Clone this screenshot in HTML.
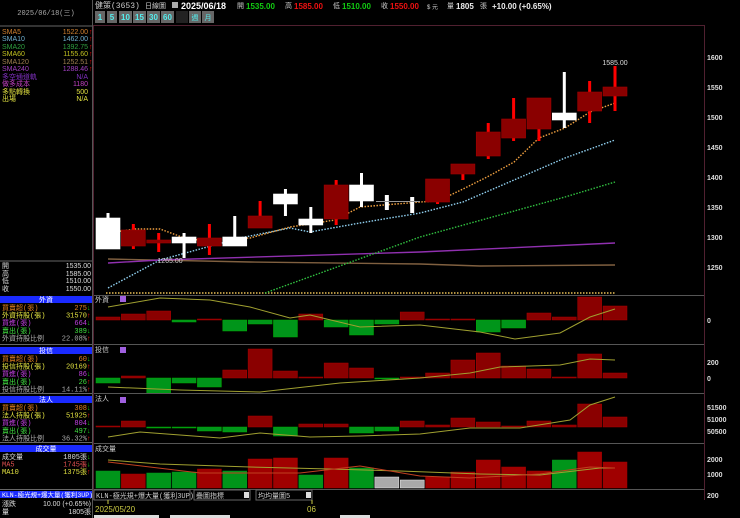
<!DOCTYPE html>
<html><head><meta charset="utf-8"><style>
html,body{margin:0;padding:0;background:#000;width:740px;height:518px;overflow:hidden}
svg{display:block}
text{font-family:"Liberation Sans","Noto Sans CJK TC",sans-serif}
.s{font-family:"Liberation Mono","Noto Sans CJK TC",monospace;font-size:7px}
</style></head><body>
<svg id="c" width="740" height="518" xmlns="http://www.w3.org/2000/svg">
<rect width="740" height="518" fill="#000"/>
<line x1="92.5" y1="0" x2="92.5" y2="518" stroke="#555"/>
<text x="46" y="15" fill="#aaa" font-size="7" text-anchor="middle" class="s">2025/06/18(三)</text>
<line x1="0" y1="26" x2="92" y2="26" stroke="#666"/>
<g class="s">
<text x="2" y="34" fill="#d08030">SMA5</text><text x="88" y="34" fill="#d08030" text-anchor="end">1522.00</text>
<text x="2" y="41" fill="#70b0d0">SMA10</text><text x="88" y="41" fill="#70b0d0" text-anchor="end">1462.00</text>
<text x="2" y="49" fill="#30a040">SMA20</text><text x="88" y="49" fill="#30a040" text-anchor="end">1392.75</text>
<text x="2" y="56" fill="#c0c020">SMA60</text><text x="88" y="56" fill="#c0c020" text-anchor="end">1155.60</text>
<text x="2" y="64" fill="#a08050">SMA120</text><text x="88" y="64" fill="#a08050" text-anchor="end">1252.51</text>
<text x="2" y="71" fill="#a040c0">SMA240</text><text x="88" y="71" fill="#a040c0" text-anchor="end">1288.46</text>
<text x="2" y="79" fill="#8030c0">多空通道軌</text><text x="88" y="79" fill="#8030c0" text-anchor="end">N/A</text>
<text x="2" y="86" fill="#c040c0">做多成本</text><text x="88" y="86" fill="#c040c0" text-anchor="end">1180</text>
<text x="2" y="94" fill="#e0e040">多點轉換</text><text x="88" y="94" fill="#e0e040" text-anchor="end">500</text>
<text x="2" y="101" fill="#e0e040">出場</text><text x="88" y="101" fill="#e0e040" text-anchor="end">N/A</text>
</g>
<g fill="#e00"><text x="89" y="34" font-size="7">↑</text><text x="89" y="41" font-size="7">↑</text><text x="89" y="49" font-size="7">↑</text><text x="89" y="56" font-size="7">↑</text><text x="89" y="64" font-size="7">↑</text><text x="89" y="71" font-size="7">↑</text></g>
<line x1="0" y1="261" x2="92" y2="261" stroke="#666"/>
<g class="s" fill="#ddd">
<text x="2" y="268">開</text><text x="91" y="268" text-anchor="end">1535.00</text>
<text x="2" y="276">高</text><text x="91" y="276" text-anchor="end">1585.00</text>
<text x="2" y="283">低</text><text x="91" y="283" text-anchor="end">1510.00</text>
<text x="2" y="291">收</text><text x="91" y="291" text-anchor="end">1550.00</text>
</g>
<g id="lp"></g>
<g font-size="8">
<text x="95" y="8" fill="#ccc" class="s" style="font-size:8px">健策(3653)</text>
<text x="145" y="8" fill="#ccc" class="s">日線圖</text>
<rect x="172" y="2" width="6" height="6" fill="#aaa"/>
<text x="181" y="9" fill="#fff" font-weight="bold" font-size="9">2025/06/18</text>
<text x="237" y="8" fill="#ccc" class="s">開</text>
<text x="246" y="9" fill="#1c1" font-weight="bold">1535.00</text>
<text x="285" y="8" fill="#ccc" class="s">高</text>
<text x="294" y="9" fill="#e11" font-weight="bold">1585.00</text>
<text x="333" y="8" fill="#ccc" class="s">低</text>
<text x="342" y="9" fill="#1c1" font-weight="bold">1510.00</text>
<text x="381" y="8" fill="#ccc" class="s">收</text>
<text x="390" y="9" fill="#e11" font-weight="bold">1550.00</text>
<text x="427" y="9" fill="#ccc" font-size="6">$ 元</text>
<text x="447" y="8" fill="#ccc" class="s">量</text>
<text x="456" y="9" fill="#eee" font-weight="bold">1805</text>
<text x="480" y="8" fill="#ccc" class="s">張</text>
<text x="492" y="9" fill="#eee" font-weight="bold">+10.00 (+0.65%)</text>
</g>
<g id="btn"></g>
<line x1="94" y1="25.5" x2="705" y2="25.5" stroke="#502030"/>
<line x1="704.5" y1="25" x2="704.5" y2="500" stroke="#502030"/>
<line x1="93.5" y1="25" x2="93.5" y2="500" stroke="#502030"/>
<g fill="#ddd" font-size="7" font-weight="bold" font-family="Liberation Serif">
<text x="707" y="60">1600</text><text x="707" y="90">1550</text><text x="707" y="120">1500</text><text x="707" y="150">1450</text><text x="707" y="180">1400</text><text x="707" y="210">1350</text><text x="707" y="240">1300</text><text x="707" y="270">1250</text>
<text x="707" y="323">0</text><text x="707" y="365">200</text><text x="707" y="381">0</text>
<text x="707" y="410">51500</text><text x="707" y="422">51000</text><text x="707" y="434">50500</text>
<text x="707" y="462">2000</text><text x="707" y="477">1000</text><text x="707" y="498">200</text>
</g>
<g id="g"></g>
<g stroke="#555"><line x1="94" y1="295.5" x2="704" y2="295.5"/><line x1="94" y1="344.5" x2="704" y2="344.5"/><line x1="94" y1="393.5" x2="704" y2="393.5"/><line x1="94" y1="443.5" x2="704" y2="443.5"/><line x1="94" y1="489.5" x2="704" y2="489.5"/></g>
<g class="s" fill="#ccc"><text x="95" y="302">外資</text><text x="95" y="352">投信</text><text x="95" y="401">法人</text><text x="95" y="451">成交量</text></g>
<g fill="#a060e0"><rect x="120" y="296" width="6" height="6"/><rect x="120" y="347" width="6" height="6"/><rect x="120" y="397" width="6" height="6"/></g>
<text x="615" y="65" fill="#ddd" font-size="7" text-anchor="middle" font-family="Liberation Serif">1585.00</text>
<text x="170" y="263" fill="#ccc" font-size="7" text-anchor="middle" font-family="Liberation Serif">1265.00</text>
<rect x="94" y="490" width="96" height="10" fill="none" stroke="#666"/>
<text x="96" y="498" fill="#ccc" class="s">KLN-極光規+爆大量(獲利3UP)</text>
<rect x="194" y="490" width="56" height="10" fill="none" stroke="#666"/>
<text x="196" y="498" fill="#ccc" class="s">疊圖指標</text><rect x="244" y="492" width="5" height="6" fill="#ddd"/>
<rect x="256" y="490" width="56" height="10" fill="none" stroke="#666"/>
<text x="258" y="498" fill="#ccc" class="s">均均量圖5</text><rect x="306" y="492" width="5" height="6" fill="#ddd"/>
<line x1="108" y1="500" x2="108" y2="504" stroke="#cc4"/><line x1="312" y1="500" x2="312" y2="504" stroke="#cc4"/>
<text x="95" y="512" fill="#cc4" font-size="8">2025/05/20</text>
<text x="307" y="512" fill="#cc4" font-size="8">06</text>
<rect x="94" y="515" width="65" height="3" fill="#ddd"/><rect x="170" y="515" width="60" height="3" fill="#ddd"/><rect x="340" y="515" width="30" height="3" fill="#ddd"/>
<rect x="0" y="491" width="92" height="7" fill="#1a2aff"/>
<text x="2" y="497" fill="#fff" class="s" style="font-size:6.5px">KLN-極光規+爆大量(獲利3UP)</text>
<g class="s" fill="#ddd"><text x="2" y="506">漲跌</text><text x="91" y="506" text-anchor="end">10.00 (+0.65%)</text><text x="2" y="514">量</text><text x="91" y="514" text-anchor="end">1805張</text></g>
</svg>
<script>
const NS="http://www.w3.org/2000/svg",g=document.getElementById('g'),lp=document.getElementById('lp'),bt=document.getElementById('btn');
function el(p,t,a,txt){const e=document.createElementNS(NS,t);for(const k in a)e.setAttribute(k,a[k]);if(txt!=null)e.textContent=txt;p.appendChild(e);return e}
[['1',95,10],['5',107,10],['10',119,13],['15',133,13],['30',147,13],['60',161,13]].forEach(b=>{el(bt,'rect',{x:b[1],y:11,width:b[2],height:12,fill:'#666'});el(bt,'text',{x:b[1]+b[2]/2,y:20,fill:'#5ee','font-size':'8','text-anchor':'middle','font-weight':'bold'},b[0])});
el(bt,'rect',{x:176,y:11,width:12,height:12,fill:'#222'});
[['週',189],['月',202]].forEach(b=>{el(bt,'rect',{x:b[1],y:11,width:12,height:12,fill:'#666'});el(bt,'text',{x:b[1]+6,y:20,fill:'#5ee','font-size':'7','text-anchor':'middle'},b[0])});
function sec(y,title,rows){el(lp,'rect',{x:0,y:y,width:92,height:7,fill:'#1a2aff'});el(lp,'text',{x:46,y:y+6,fill:'#fff',class:'s','text-anchor':'middle'},title);
rows.forEach((r,i)=>{const yy=y+14+i*7.6;el(lp,'text',{x:2,y:yy,fill:r[0],class:'s'},r[1]);el(lp,'text',{x:87,y:yy,fill:r[0],class:'s','text-anchor':'end'},r[2]);if(r[3])el(lp,'text',{x:87,y:yy,fill:r[3]=='u'?'#e11':'#1c1','font-size':'7'},r[3]=='u'?'↑':'↓')});}
sec(296,'外資',[['#e08020','買賣超(張)','275','d'],['#e0e040','外資持股(張)','31570','u'],['#c040e0','買進(張)','664','d'],['#40e040','賣出(張)','389','d'],['#aaa','外資持股比例','22.08%','u']]);
el(lp,'line',{x1:0,y1:344.5,x2:92,y2:344.5,stroke:'#666'});
sec(347,'投信',[['#e08020','買賣超(張)','60','d'],['#e0e040','投信持股(張)','20169','u'],['#c040e0','買進(張)','86','d'],['#40e040','賣出(張)','26','u'],['#aaa','投信持股比例','14.11%','u']]);
el(lp,'line',{x1:0,y1:393.5,x2:92,y2:393.5,stroke:'#666'});
sec(396,'法人',[['#e08020','買賣超(張)','308','d'],['#e0e040','法人持股(張)','51925','u'],['#c040e0','買進(張)','804','d'],['#40e040','賣出(張)','497','d'],['#aaa','法人持股比例','36.32%','u']]);
el(lp,'line',{x1:0,y1:442.5,x2:92,y2:442.5,stroke:'#666'});
sec(445,'成交量',[['#ddd','成交量','1805張','d'],['#e05050','MA5','1745張','d'],['#e0e040','MA10','1375張','u']]);
el(lp,'line',{x1:0,y1:489.5,x2:92,y2:489.5,stroke:'#666'});
const X=i=>108+i*25.35;
function pl(pts,c,dash,w){el(g,'polyline',{points:pts.map(p=>p.join(',')).join(' '),fill:'none',stroke:c,'stroke-width':w||1.4,'stroke-dasharray':dash||''})}
pl([[106,293],[615,293]],'#b09040','1.5,1.5',2);
pl([[108,259],[250,262],[420,264],[480,266],[615,265]],'#806040');
pl([[108,263],[160,260],[420,252],[615,243]],'#9030b0');
pl([[265,293],[420,237],[565,197],[615,182]],'#30c040','1.5,1.5');
pl([[108,288],[160,260],[240,238],[290,228],[310,232],[360,223],[420,213],[463,202],[514,180],[565,158],[615,140]],'#90d0f0','1.5,1.5');
pl([[108,233],[135,229],[160,229],[190,240],[250,238],[290,227],[335,220],[360,207],[420,202],[438,201],[463,189],[489,176],[514,162],[539,138],[565,128],[590,112],[615,103]],'#f0a040','1.5,1.5');
const C=[[218,249,213,249,'w'],[230,246,224,249,'r'],[240,243,233,252,'r'],[237,243,233,258,'w'],[238,246,224,255,'r'],[237,246,216,246,'w'],[216,228,201,228,'r'],[194,204,189,216,'w'],[219,225,207,233,'w'],[185,219,180,225,'r'],[185,201,173,207,'w'],[195,210,195,210,'w',1],[197,213,197,213,'w',1],[179,202,179,204,'r'],[164,174,164,180,'r'],[132,156,123,159,'r'],[119,138,98,141,'r'],[98,129,98,141,'r'],[113,120,72,128,'w'],[92,111,81,123,'r'],[87,96,66,111,'r']];
C.forEach((c,i)=>{const x=X(i),w=c[4]=='w';const wc=w?'#fff':'#f00';
if(c[5]){el(g,'rect',{x:x-2,y:c[0],width:4,height:c[1]-c[0],fill:'#fff'});return;}
el(g,'rect',{x:x-1.5,y:c[2],width:3,height:c[3]-c[2],fill:wc});
let bh=Math.max(c[1]-c[0],2);el(g,'rect',{x:x-12,y:c[0],width:24,height:bh,fill:w?'#fff':'#8a0000',stroke:w?'#fff':'#a00000','stroke-width':0.6});});
el(g,'line',{x1:376,y1:201.5,x2:420,y2:201.5,stroke:'#999','stroke-width':1});
function bars(z,arr,lineP){arr.forEach((t,i)=>{const x=X(i);const up=t<z;const y=Math.min(t,z),h=Math.max(Math.abs(t-z),1);el(g,'rect',{x:x-12,y:y,width:24,height:h,fill:up?'#8a0000':'#00951a',stroke:up?'#a00':'#0a0','stroke-width':0.5})});pl(lineP,'#a0a030','',1);}
bars(320,[317,314,311,322,319,331,324,337,314,327,335,324,312,319,319,332,328,313,317,297,306],[[108,307],[160,298],[210,300],[250,307],[290,318],[310,315],[360,327],[420,325],[480,332],[515,339],[560,333],[590,317],[615,309]]);
bars(378,[383,376,393,383,387,370,349,371,377,363,368,379,377,373,360,353,366,369,377,354,373],[[108,387],[180,390],[260,392],[340,383],[420,378],[470,373],[500,367],[560,365],[590,359],[615,360]]);
bars(427,[426,421,428,428,431,432,416,436,424,424,433,431,421,425,418,422,426,421,425,404,417],[[108,437],[140,432],[220,438],[260,433],[310,437],[360,436],[420,434],[470,428],[520,428],[570,420],[590,405],[615,397]]);
const V=[[471,'g'],[474,'r'],[473,'g'],[472,'g'],[469,'r'],[471,'g'],[459,'r'],[458,'r'],[475,'g'],[458,'r'],[468,'g'],[477,'s'],[480,'s'],[477,'r'],[472,'r'],[460,'r'],[467,'r'],[471,'r'],[460,'g'],[452,'r'],[462,'r']];
V.forEach((v,i)=>{const x=X(i);const col=v[1]=='g'?'#00951a':v[1]=='r'?'#a00000':'#aaa';el(g,'rect',{x:x-12,y:v[0],width:24,height:488-v[0],fill:col,stroke:v[1]=='s'?'#eee':col,'stroke-width':0.5})});
pl([[108,460],[160,464],[250,467],[330,469],[400,471],[480,474],[540,475],[600,468],[615,468]],'#a0a030','',1);
pl([[108,462],[200,473],[300,473],[360,466],[420,476],[470,478],[540,474],[590,467],[615,468]],'#c04020','',1);
</script>
</body></html>
